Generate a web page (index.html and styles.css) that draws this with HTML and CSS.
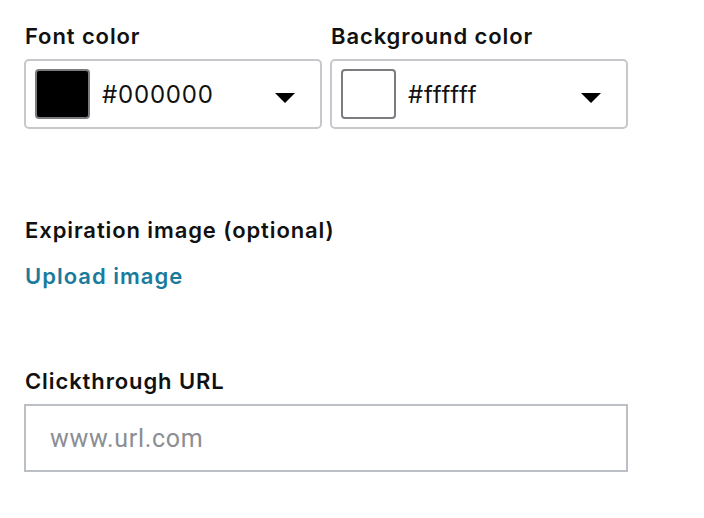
FILE: index.html
```html
<!DOCTYPE html>
<html>
<head>
<meta charset="utf-8">
<link rel="stylesheet" href="styles.css">
</head>
<body>
<div class="form">
  <div class="color-row">
    <div class="field">
      <div class="label">Font color</div>
      <div class="picker">
        <span class="swatch swatch-black"></span>
        <span class="hex">#000000</span>
        <span class="caret"></span>
      </div>
    </div>
    <div class="field">
      <div class="label">Background color</div>
      <div class="picker">
        <span class="swatch swatch-white"></span>
        <span class="hex">#ffffff</span>
        <span class="caret"></span>
      </div>
    </div>
  </div>
  <div class="section expiration">
    <div class="label">Expiration image (optional)</div>
    <a class="upload" href="#">Upload image</a>
  </div>
  <div class="section clickthrough">
    <div class="label">Clickthrough URL</div>
    <input class="url" type="text" placeholder="www.url.com">
  </div>
</div>
</body>
</html>
```
FILE: styles.css
```css
* { box-sizing: border-box; }
html, body { margin: 0; padding: 0; background: #fff; }
body {
  font-family: "Inter", "Open Sans", sans-serif;
  color: #111;
}
.form {
  padding: 23px 0 0 24px;
  width: 652px;
}
.color-row {
  display: flex;
  gap: 8px;
}
.field { width: 298px; }
.label {
  font-size: 22px;
  font-weight: 600;
  line-height: 26px;
  letter-spacing: 0.9px;
  color: #111;
  padding-left: 1px;
}
.picker {
  margin-top: 10px;
  height: 70px;
  border: 2px solid #c6c8cc;
  border-radius: 5px;
  display: flex;
  align-items: center;
  padding: 0 25px 0 9px;
}
.swatch {
  width: 55px;
  height: 50px;
  border: 2px solid #7a7c80;
  border-radius: 4px;
  flex: none;
}
.swatch-black { background: #000; }
.swatch-white { background: #fff; }
.hex {
  margin-left: 12px;
  font-size: 24px;
  letter-spacing: 0.8px;
  flex: 1;
  color: #111;
  line-height: 29px;
}
.caret {
  width: 0; height: 0;
  margin-top: 8px;
  border-left: 10px solid transparent;
  border-right: 10px solid transparent;
  border-top: 10px solid #000;
}
.expiration { margin-top: 88px; }
.upload {
  display: block;
  margin-top: 20px;
  padding-left: 1px;
  font-size: 22px;
  font-weight: 600;
  letter-spacing: 1px;
  color: #1a7b9d;
  text-decoration: none;
  line-height: 26px;
}
.clickthrough { margin-top: 79px; }
.url {
  display: block;
  margin-top: 10px;
  width: 604px;
  height: 68px;
  border: 2px solid #bcbfc4;
  border-radius: 0;
  padding: 0 24px;
  font-family: "Roboto", "Liberation Sans", sans-serif;
  font-size: 25px;
  letter-spacing: 0.7px;
  color: #111;
  outline: none;
  background: #fff;
}
.url::placeholder { color: #8b8e93; }
```
